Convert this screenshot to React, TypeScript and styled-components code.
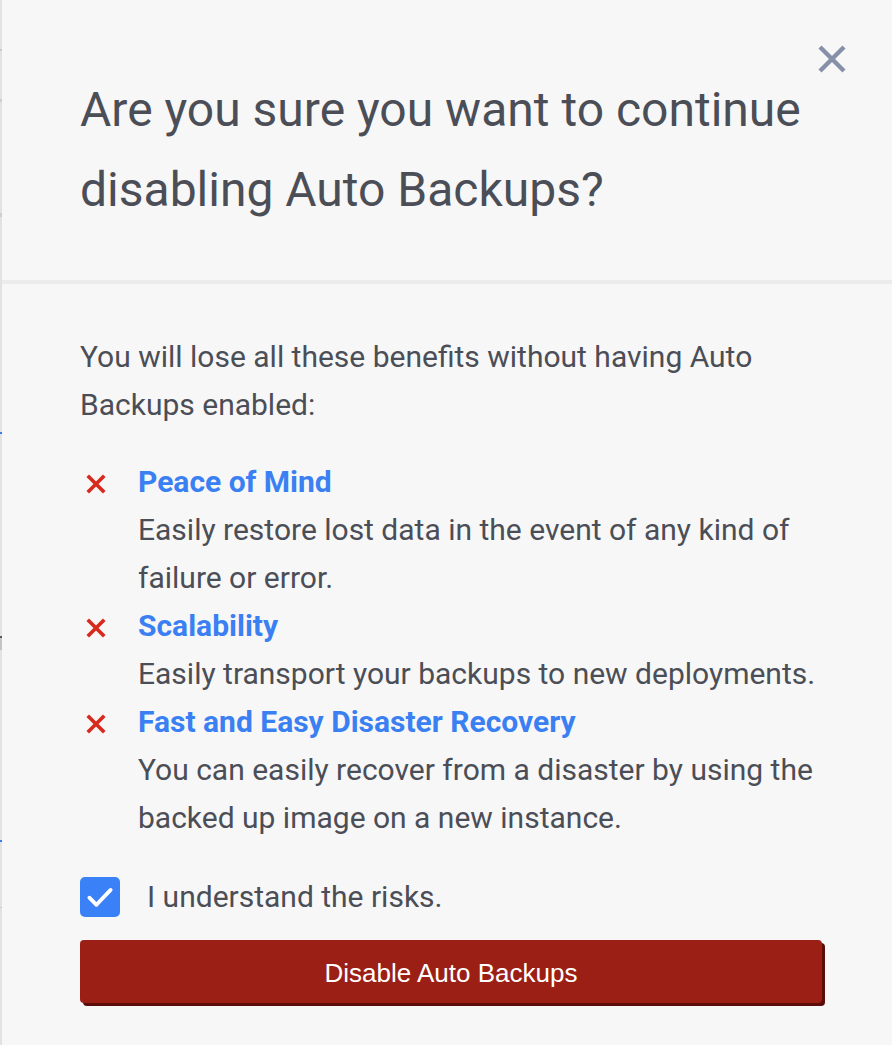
import React from "react";
import styled, { createGlobalStyle } from "styled-components";

const Global = createGlobalStyle`
  html, body { margin: 0; padding: 0; background: #f7f7f7; }
  body { font-family: Roboto, "Noto Sans", sans-serif; -webkit-font-smoothing: antialiased; }
  * { box-sizing: border-box; }
`;

const Page = styled.div`
  display: flex;
  width: 892px;
  height: 1045px;
  overflow: hidden;
  background: #f7f7f7;
`;

const EdgeStrip = styled.div`
  position: relative;
  width: 2px;
  flex: 0 0 2px;
  background: #e2e2e4;
`;

const EdgeMark = styled.span<{ $top: number; $h: number; $c: string }>`
  position: absolute;
  left: 0;
  width: 2px;
  top: ${(p) => p.$top}px;
  height: ${(p) => p.$h}px;
  background: ${(p) => p.$c};
`;

const Dialog = styled.div`
  flex: 1;
  display: flex;
  flex-direction: column;
`;

const Header = styled.header`
  display: flex;
  align-items: flex-start;
  padding: 70px 44px 50px 78px;
  border-bottom: 4px solid #ececec;
`;

const Title = styled.h1`
  flex: 1;
  margin: 0;
  font-size: 48px;
  line-height: 80px;
  font-weight: 400;
  color: #4b4e56;
`;

const CloseButton = styled.button`
  flex: 0 0 auto;
  margin-top: -27px;
  margin-left: 0;
  width: 32px;
  height: 32px;
  padding: 0;
  border: none;
  background: transparent;
  display: flex;
  align-items: center;
  justify-content: center;
  cursor: pointer;
`;

const Body = styled.div`
  display: flex;
  flex-direction: column;
  padding: 49px 68px 0 78px;
`;

const Lead = styled.p`
  margin: 0;
  font-size: 30px;
  line-height: 48px;
  color: #4b4e56;
`;

const Benefits = styled.ul`
  list-style: none;
  margin: 29px 0 0;
  padding: 0;
  display: flex;
  flex-direction: column;
`;

const Benefit = styled.li`
  display: grid;
  grid-template-columns: 58px 1fr;
`;

const IconCell = styled.div`
  height: 48px;
  display: flex;
  align-items: center;
  padding-left: 5px;
  padding-top: 4px;
`;

const BenefitTitle = styled.div`
  font-size: 30px;
  line-height: 48px;
  font-weight: 700;
  color: #3a80f2;
`;

const BenefitText = styled.div`
  font-size: 30px;
  line-height: 48px;
  color: #4b4e56;
`;

const ConfirmRow = styled.label`
  display: flex;
  align-items: center;
  gap: 27px;
  margin-top: 34px;
  cursor: pointer;
`;

const CheckBox = styled.span`
  width: 40px;
  height: 40px;
  border-radius: 5px;
  background: #3a80f6;
  display: flex;
  align-items: center;
  justify-content: center;
`;

const ConfirmText = styled.span`
  font-size: 30px;
  line-height: 40px;
  color: #4b4e56;
  padding-top: 1px;
`;

const DangerButton = styled.button`
  margin-top: 23px;
  width: 742px;
  height: 63px;
  border: none;
  border-radius: 4px;
  background: #9c1f15;
  box-shadow: 3px 3px 0 #5c0d09;
  color: #ffffff;
  font-family: "Liberation Sans", Arial, sans-serif;
  font-size: 26px;
  padding-top: 4px;
  cursor: pointer;
`;

const XIcon = ({ size, color, stroke }: { size: number; color: string; stroke: number }) => (
  <svg width={size} height={size} viewBox="0 0 24 24" fill="none">
    <path d="M3 3 L21 21 M21 3 L3 21" stroke={color} strokeWidth={stroke} strokeLinecap="butt" />
  </svg>
);

const benefits = [
  {
    title: "Peace of Mind",
    text: "Easily restore lost data in the event of any kind of failure or error.",
  },
  {
    title: "Scalability",
    text: "Easily transport your backups to new deployments.",
  },
  {
    title: "Fast and Easy Disaster Recovery",
    text: "You can easily recover from a disaster by using the backed up image on a new instance.",
  },
];

const marks = [
  { top: 49, h: 2, c: "#c9c9cb" },
  { top: 99, h: 3, c: "#d0d0d2" },
  { top: 213, h: 4, c: "#cfcfd1" },
  { top: 432, h: 2, c: "#3a7ff0" },
  { top: 636, h: 2, c: "#555860" },
  { top: 638, h: 12, c: "#c4c4c6" },
  { top: 840, h: 2, c: "#3a7ff0" },
  { top: 907, h: 1, c: "#cfcfd1" },
];

export default function App() {
  return (
    <>
      <Global />
      <Page>
        <EdgeStrip>
          {marks.map((m, i) => (
            <EdgeMark key={i} $top={m.top} $h={m.h} $c={m.c} />
          ))}
        </EdgeStrip>
        <Dialog>
          <Header>
            <Title>Are you sure you want to continue disabling Auto Backups?</Title>
            <CloseButton aria-label="Close">
              <XIcon size={32} color="#8690a8" stroke={3.3} />
            </CloseButton>
          </Header>
          <Body>
            <Lead>You will lose all these benefits without having Auto Backups enabled:</Lead>
            <Benefits>
              {benefits.map((b) => (
                <Benefit key={b.title}>
                  <IconCell>
                    <XIcon size={22} color="#d8291d" stroke={4} />
                  </IconCell>
                  <div>
                    <BenefitTitle>{b.title}</BenefitTitle>
                    <BenefitText>{b.text}</BenefitText>
                  </div>
                </Benefit>
              ))}
            </Benefits>
            <ConfirmRow>
              <CheckBox>
                <svg width="34" height="34" viewBox="0 0 24 24" fill="none">
                  <path d="M4.5 12.5 L9.5 17.5 L19.5 7" stroke="#ffffff" strokeWidth="2.7" strokeLinecap="round" strokeLinejoin="round" />
                </svg>
              </CheckBox>
              <ConfirmText>I understand the risks.</ConfirmText>
            </ConfirmRow>
            <DangerButton>Disable Auto Backups</DangerButton>
          </Body>
        </Dialog>
      </Page>
    </>
  );
}
